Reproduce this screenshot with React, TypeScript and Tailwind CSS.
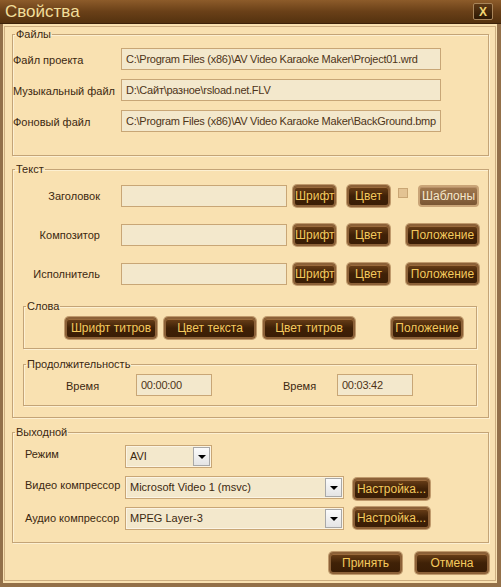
const inputCls =
  "h-[22px] border border-[#c8a676] bg-[#f3e8cc] px-[4px] flex items-center text-[#4e3418] text-[11px] tracking-[-0.25px] whitespace-nowrap overflow-hidden";

function Btn({ label, w, disabled }: { label: string; w: string; disabled?: boolean }) {
  if (disabled) {
    return (
      <button
        className={`${w} block h-[22px] rounded-[4px] border-2 border-[#c9a477] bg-gradient-to-b from-[#a27a50] to-[#7a5634] text-[#f6e8cc] text-[12px] leading-none whitespace-nowrap shadow-[inset_0_1px_0_#b89068]`}
      >
        {label}
      </button>
    );
  }
  return (
    <button
      className={`${w} block h-[22px] rounded-[4px] border-2 border-[#8c6138] bg-gradient-to-b from-[#6a3f18] via-[#3f2107] to-[#3a1d05] text-[#f4c95e] text-[12px] leading-none whitespace-nowrap shadow-[0_0_0_1px_#c09a6c,inset_0_1px_0_#9a6a3c]`}
    >
      {label}
    </button>
  );
}

function Select({ value, w }: { value: string; w: string }) {
  return (
    <div className={`${w} h-[23px] border border-[#c8a676] bg-[#f3e8cc] flex shadow-[inset_0_0_0_1px_#fbf4e4]`}>
      <div className="flex-1 flex items-center px-[4px] text-[#3c2810] text-[11px] whitespace-nowrap">{value}</div>
      <div className="w-[17px] m-[1px] bg-gradient-to-b from-[#fbfbfb] to-[#e4e4e4] border border-[#a8a8a8] flex items-center justify-center">
        <div className="w-0 h-0 border-l-[4px] border-r-[4px] border-t-[4px] border-l-transparent border-r-transparent border-t-black" />
      </div>
    </div>
  );
}

const labelCls = "text-[11px] text-[#3c2810] whitespace-nowrap";
const legendCls = "ml-[2px] px-[1px] text-[11px] leading-[14px] text-[#3c2810]";
const fsCls = "border border-[#c4a477] shadow-[1px_1px_0_#fdf0d2,inset_1px_1px_0_#fdf0d2]";

export default function App() {
  return (
    <div className="w-[501px] h-[587px] flex flex-col bg-[#f9e1b1] font-['Liberation_Sans',Arial,sans-serif] select-none overflow-hidden">
      {/* title bar */}
      <div className="h-[24px] shrink-0 flex items-center justify-between bg-gradient-to-b from-[#8d5c2a] via-[#6a4018] to-[#54320f] border-b border-[#3c220a] pl-[5px] pr-[8px]">
        <span className="text-[17px] leading-none text-[#f2de9a]">Свойства</span>
        <div className="w-[20px] h-[17px] rounded-[2px] border border-[#a8855a] bg-gradient-to-b from-[#5c3816] to-[#2e1804] flex items-center justify-center text-[#f1d574] text-[12px] font-bold leading-none">
          X
        </div>
      </div>

      {/* body */}
      <div className="flex-1 min-h-0 flex flex-col border-l-[3px] border-r-[4px] border-b-[4px] border-[#937049] pt-[2px] pb-[2px] pl-[1px] pr-[1px]">
        <div className="flex-1 flex flex-col border border-[#cdae80] pl-[7px] pr-[6px]">
          {/* Файлы */}
          <fieldset className={`${fsCls} pb-[23px]`}>
            <legend className={legendCls}>Файлы</legend>
            <div className="mt-[7px] flex flex-col gap-[9px]">
              {[
                ["Файл проекта", "C:\\Program Files (x86)\\AV Video Karaoke Maker\\Project01.wrd"],
                ["Музыкальный файл", "D:\\Сайт\\разное\\rsload.net.FLV"],
                ["Фоновый файл", "C:\\Program Files (x86)\\AV Video Karaoke Maker\\BackGround.bmp"],
              ].map(([label, value]) => (
                <div key={label} className="flex items-center">
                  <span className={`${labelCls} w-[108px] pt-[2px]`}>{label}</span>
                  <div className={`${inputCls} w-[320px]`}>{value}</div>
                </div>
              ))}
            </div>
          </fieldset>

          {/* Текст */}
          <fieldset className={`${fsCls} mt-[6px] pb-[11px]`}>
            <legend className={legendCls}>Текст</legend>
            <div className="mt-[9px] flex flex-col gap-[17px]">
              {["Заголовок", "Композитор", "Исполнитель"].map((label, i) => (
                <div key={label} className="flex items-center h-[22px]">
                  <span className={`${labelCls} w-[87px] text-right`}>{label}</span>
                  <div className={`${inputCls} w-[166px] ml-[21px]`} />
                  <div className="ml-[6px]">
                    <Btn label="Шрифт" w="w-[43px]" />
                  </div>
                  <div className="ml-[11px]">
                    <Btn label="Цвет" w="w-[43px]" />
                  </div>
                  {i === 0 ? (
                    <>
                      <div className="ml-[8px] mb-[7px] w-[10px] h-[10px] bg-[#e3c393] border border-[#c9a674]" />
                      <div className="ml-[10px]">
                        <Btn label="Шаблоны" w="w-[61px]" disabled />
                      </div>
                    </>
                  ) : (
                    <div className="ml-[16px]">
                      <Btn label="Положение" w="w-[73px]" />
                    </div>
                  )}
                </div>
              ))}
            </div>

            {/* Слова */}
            <fieldset className={`${fsCls} mt-[14px] ml-[10px] w-[454px] pb-[9px]`}>
              <legend className={legendCls}>Слова</legend>
              <div className="mt-[4px] pl-[41px] flex items-center">
                <Btn label="Шрифт титров" w="w-[92px]" />
                <div className="ml-[7px]">
                  <Btn label="Цвет текста" w="w-[92px]" />
                </div>
                <div className="ml-[7px]">
                  <Btn label="Цвет титров" w="w-[92px]" />
                </div>
                <div className="ml-[36px]">
                  <Btn label="Положение" w="w-[72px]" />
                </div>
              </div>
            </fieldset>

            {/* Продолжительность */}
            <fieldset className={`${fsCls} mt-[8px] ml-[10px] w-[454px] pb-[9px]`}>
              <legend className={legendCls}>Продолжительность</legend>
              <div className="mt-[3px] flex items-center">
                <span className={`${labelCls} w-[112px] pl-[42px] pt-[2px]`}>Время</span>
                <div className={`${inputCls} w-[76px]`}>00:00:00</div>
                <span className={`${labelCls} ml-[71px] w-[54px] pt-[2px]`}>Время</span>
                <div className={`${inputCls} w-[76px]`}>00:03:42</div>
              </div>
            </fieldset>
          </fieldset>

          {/* Выходной */}
          <fieldset className={`${fsCls} mt-[7px] pb-[12px]`}>
            <legend className={legendCls}>Выходной</legend>
            <div className="mt-[6px] pl-[12px] flex flex-col gap-[8px]">
              <div className="flex items-center">
                <span className={`${labelCls} w-[100px] mb-[4px]`}>Режим</span>
                <Select value="AVI" w="w-[87px]" />
              </div>
              <div className="flex items-center h-[23px]">
                <span className={`${labelCls} w-[100px] mb-[4px]`}>Видео компрессор</span>
                <Select value="Microsoft Video 1 (msvc)" w="w-[219px]" />
                <div className="ml-[9px] mt-[2px]">
                  <Btn label="Настройка..." w="w-[77px]" />
                </div>
              </div>
              <div className="flex items-center h-[23px]">
                <span className={`${labelCls} w-[100px]`}>Аудио компрессор</span>
                <Select value="MPEG Layer-3" w="w-[219px]" />
                <div className="ml-[9px] mb-[2px]">
                  <Btn label="Настройка..." w="w-[77px]" />
                </div>
              </div>
            </div>
          </fieldset>

          {/* buttons */}
          <div className="mt-[9px] flex justify-end gap-[13px]">
            <Btn label="Принять" w="w-[73px]" />
            <Btn label="Отмена" w="w-[74px]" />
          </div>
        </div>
      </div>
    </div>
  );
}
